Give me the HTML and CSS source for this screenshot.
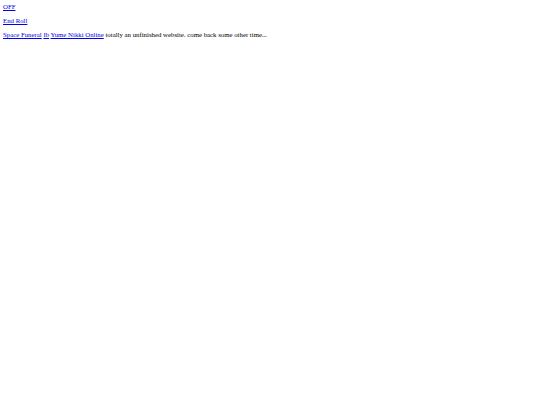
FILE: index.html
```html
<!DOCTYPE html>
<html>
<head>
<meta charset="utf-8">
<link rel="stylesheet" href="styles.css">
</head>
<body class="page">
<p class="line"><a href="#">OFF</a></p>
<p class="line"><a href="#">End Roll</a></p>
<p class="line"><a href="#">Space Funeral</a> <a href="#">Ib</a> <a href="#">Yume Nikki Online</a> totally an unfinished website. come back some other time...</p>
</body>
</html>
```
FILE: styles.css
```css
html { background: #ffffff; }
.page {
  margin: 2px 3px;
  font-family: "Liberation Serif", serif;
  font-size: 6.8px;
  line-height: 9px;
  color: #000000;
}
.line { margin: 0 0 5px 0; }
.line a { color: #0000ee; }
```
